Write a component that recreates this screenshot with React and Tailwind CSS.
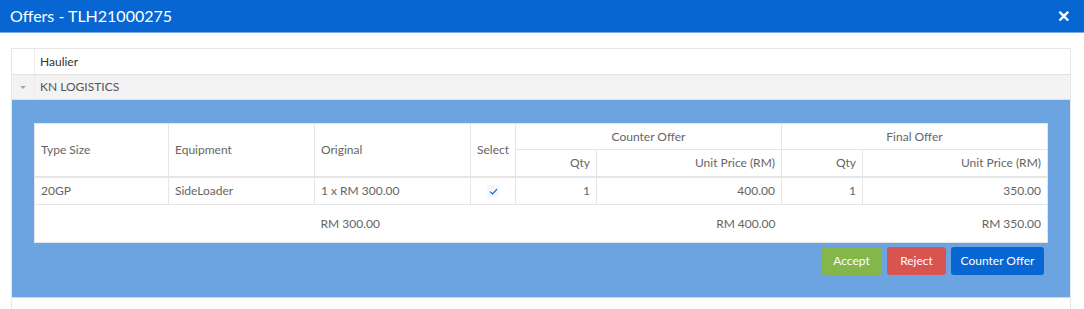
import React from 'react';

const rows = [
    { type: '20GP', equipment: 'SideLoader', original: '1 x RM 300.00', cQty: '1', cPrice: '400.00', fQty: '1', fPrice: '350.00' },
];

const CheckMark = () => (
    <span className="inline-flex items-center justify-center w-[12px] h-[12px] rounded-[2px] bg-[#f4f8fd]">
        <svg width="9" height="7" viewBox="0 0 10 8">
            <path d="M1 4.2 L3.8 6.8 L9 1.2" fill="none" stroke="#0866d2" strokeWidth="1.4" />
        </svg>
    </span>
);

const App = () => {
    return (
        <div className="w-[1084px] h-[309px] bg-white overflow-hidden text-[#656565]" style={{ fontFamily: 'Lato, "Open Sans", sans-serif' }}>
            <div className="h-[33px] bg-[#0866d2] border-b border-[#7aa9e3] flex items-center justify-between pl-[10px] pr-[14px]">
                <h1 className="text-white text-[16px] leading-none">Offers - TLH21000275</h1>
                <span className="text-white text-[16px] font-bold leading-none">✕</span>
            </div>

            <div className="mx-[11px] mt-[15px] w-[1060px] border border-[#e6e6e6] border-b-0">
                <div className="flex h-[26px] border-b border-[#e0e0e0] text-[12px] text-[#333]">
                    <div className="w-[23px] border-r border-[#ececec]" />
                    <div className="pl-[5px] flex items-center">Haulier</div>
                </div>
                <div className="flex h-[25px] bg-[#f3f3f3] border-b border-[#e0e0e0] text-[12px] text-[#555]">
                    <div className="w-[23px] flex items-center justify-center border-r border-[#ececec]">
                        <span className="w-0 h-0 border-l-[3px] border-r-[3px] border-t-[3px] border-l-transparent border-r-transparent border-t-[#a8a8a8]" />
                    </div>
                    <div className="pl-[5px] flex items-center">KN LOGISTICS</div>
                </div>

                <div className="bg-[#6ca4e2] pl-[22px] pr-[23px] pt-[23px] pb-[22px] border-b border-[#c9daf0]">
                    <table className="w-[1014px] bg-white border-collapse text-[12px] text-[#656565]">
                        <thead>
                            <tr className="h-[26px]">
                                <th rowSpan={2} className="w-[134px] border border-[#e6e6e6] border-b-2 font-normal text-left px-[6px]">Type Size</th>
                                <th rowSpan={2} className="w-[146px] border border-[#e6e6e6] border-b-2 font-normal text-left px-[6px]">Equipment</th>
                                <th rowSpan={2} className="w-[156px] border border-[#e6e6e6] border-b-2 font-normal text-left px-[6px]">Original</th>
                                <th rowSpan={2} className="w-[45px] border border-[#e6e6e6] border-b-2 font-normal text-center px-[4px]">Select</th>
                                <th colSpan={2} className="border border-[#e6e6e6] font-normal text-center">Counter Offer</th>
                                <th colSpan={2} className="border border-[#e6e6e6] font-normal text-center">Final Offer</th>
                            </tr>
                            <tr className="h-[27px]">
                                <th className="w-[81px] border border-[#e6e6e6] border-b-2 font-normal text-right px-[6px]">Qty</th>
                                <th className="w-[185px] border border-[#e6e6e6] border-b-2 font-normal text-right px-[6px]">Unit Price (RM)</th>
                                <th className="w-[81px] border border-[#e6e6e6] border-b-2 font-normal text-right px-[6px]">Qty</th>
                                <th className="w-[185px] border border-[#e6e6e6] border-b-2 font-normal text-right px-[6px]">Unit Price (RM)</th>
                            </tr>
                        </thead>
                        <tbody>
                            {rows.map((r) => (
                                <tr key={r.type} className="h-[28px]">
                                    <td className="border border-[#e6e6e6] px-[6px]">{r.type}</td>
                                    <td className="border border-[#e6e6e6] px-[6px]">{r.equipment}</td>
                                    <td className="border border-[#e6e6e6] px-[6px]">{r.original}</td>
                                    <td className="border border-[#e6e6e6] text-center"><CheckMark /></td>
                                    <td className="border border-[#e6e6e6] px-[6px] text-right">{r.cQty}</td>
                                    <td className="border border-[#e6e6e6] px-[6px] text-right">{r.cPrice}</td>
                                    <td className="border border-[#e6e6e6] px-[6px] text-right">{r.fQty}</td>
                                    <td className="border border-[#e6e6e6] px-[6px] text-right">{r.fPrice}</td>
                                </tr>
                            ))}
                            <tr className="h-[38px]">
                                <td colSpan={2} className="border border-[#e6e6e6] border-r-0" />
                                <td className="px-[6px] border-y border-[#e6e6e6]">RM 300.00</td>
                                <td colSpan={3} className="px-[6px] text-right border-y border-[#e6e6e6]">RM 400.00</td>
                                <td colSpan={2} className="px-[6px] text-right border border-[#e6e6e6] border-l-0">RM 350.00</td>
                            </tr>
                        </tbody>
                    </table>

                    <div className="flex justify-end gap-[5px] mt-[4px] pr-[3px] text-[12px] text-white">
                        <button className="w-[61px] h-[28px] rounded-[3px] bg-[#84b64c]">Accept</button>
                        <button className="w-[59px] h-[28px] rounded-[3px] bg-[#d9534f]">Reject</button>
                        <button className="w-[93px] h-[28px] rounded-[3px] bg-[#0866d2]">Counter Offer</button>
                    </div>
                </div>
                <div className="h-[20px] bg-white" />
            </div>
        </div>
    );
};

export default App;
